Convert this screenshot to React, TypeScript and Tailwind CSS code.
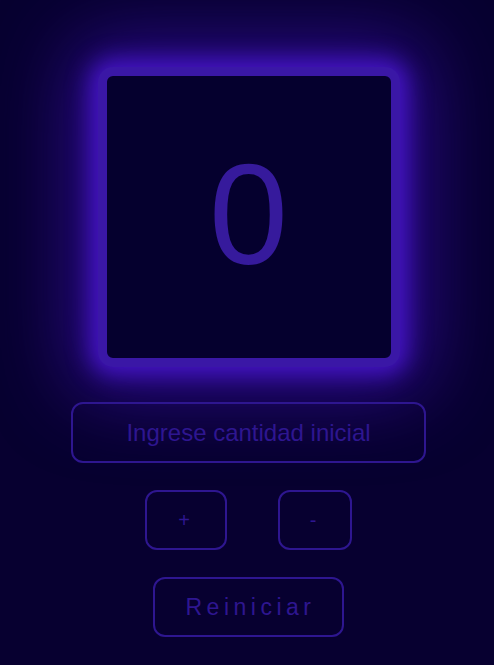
import React, { useState } from "react";

function App() {
  const [count, setCount] = useState(0);
  const [initial, setInitial] = useState("");

  return (
    <div className="min-h-screen w-full bg-[#070030] flex flex-col items-center pt-[67px] pl-[3px] font-['Liberation_Sans',Arial,sans-serif]">
      {/* Display */}
      <div className="w-[302px] h-[300px] rounded-[15px] border-[9px] border-[#3a17a6] bg-[#05002e] shadow-[0_0_22px_8px_#4414c4,0_0_75px_30px_rgba(64,16,184,0.6)] flex items-center justify-center">
        <span className="text-[142px] leading-none text-[#361a9c] pb-[4px]">{count}</span>
      </div>

      {/* Input */}
      <input
        value={initial}
        onChange={(e) => setInitial(e.target.value)}
        placeholder="Ingrese cantidad inicial"
        className="mt-[35px] w-[355px] h-[61px] rounded-[12px] border-2 border-[#2e1690] bg-transparent text-center text-[24px] text-[#361a9c] placeholder:text-[#2e1690] outline-none"
      />

      {/* + / - */}
      <div className="mt-[27px] flex gap-[51px]">
        <button
          onClick={() => setCount(count + 1)}
          className="w-[82px] h-[60px] rounded-[12px] border-2 border-[#2e1690] text-[20px] tracking-[4px] text-[#2e1690]"
        >
          +
        </button>
        <button
          onClick={() => setCount(count - 1)}
          className="w-[74px] h-[60px] rounded-[12px] border-2 border-[#2e1690] text-[20px] tracking-[4px] text-[#2e1690]"
        >
          -
        </button>
      </div>

      {/* Reset */}
      <button
        onClick={() => setCount(Number(initial) || 0)}
        className="mt-[27px] w-[191px] h-[60px] rounded-[12px] border-2 border-[#2e1690] text-[23px] tracking-[4.5px] text-[#2e1690] pl-[4px]"
      >
        Reiniciar
      </button>
    </div>
  );
}

export default App;
